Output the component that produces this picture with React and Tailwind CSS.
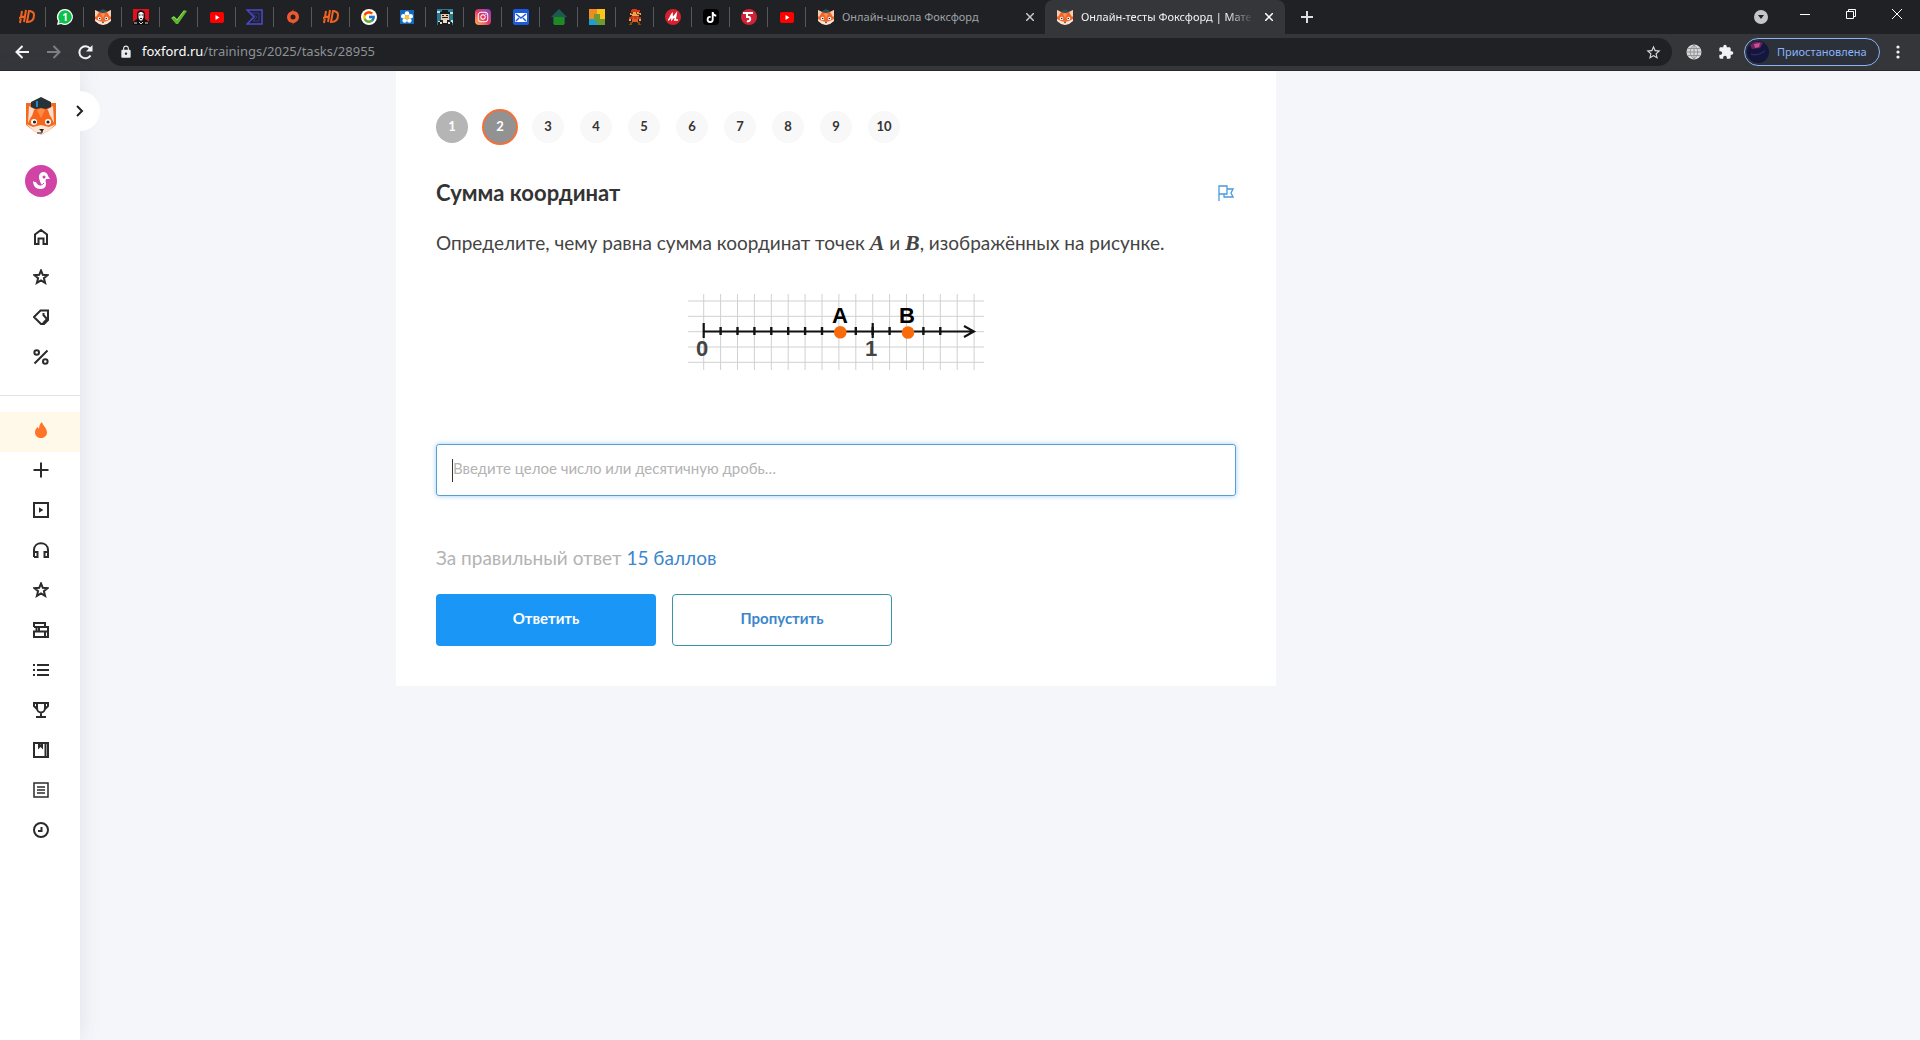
import React, { useState } from 'react';
import { FcGoogle } from 'react-icons/fc';
import { FaTiktok, FaInstagram } from 'react-icons/fa';
import { MdStarBorder, MdExtension, MdLock } from 'react-icons/md';

const FoxIcon = () => (
    <svg width="16" height="16" viewBox="0 0 16 16">
        <path d="M0 1l4 2h8l4-2v10l-3 3-5 2-5-2-3-3z" fill="#f0652a" />
        <path d="M0 1l4 2-3 5-1-1zM16 1l-4 2 3 5 1-1z" fill="#fbcdb0" />
        <path d="M4 2l4-2 4 2v1l-4 1-4-1z" fill="#23515c" />
        <path d="M6 5l2-1 2 1-2 4z" fill="#ff9050" />
        <path d="M0 10l4 2 4 1 4-1 4-2v2l-4 3-4 1-4-1-4-3z" fill="#fde3d4" />
        <circle cx="4.500" cy="9.500" r="1.700" fill="#fff" />
        <circle cx="11.500" cy="9.500" r="1.700" fill="#fff" />
        <circle cx="4.700" cy="9.500" r="0.800" fill="#222" />
        <circle cx="11.300" cy="9.500" r="0.800" fill="#222" />
        <path d="M7 13h2l-1 1.500z" fill="#222" />
    </svg>
);

const HdIcon = () => (
    <svg width="16" height="16" viewBox="0 0 16 16" fill="none" stroke="#f26322" strokeWidth="2">
        <path d="M3 2L1 14M7 1L5 13M0 9l7-2M10 2L8 13c5 0 7-3 7-7 0-3-2-4-6-4" />
    </svg>
);

const YoutubeIcon = () => (
    <svg width="16" height="16" viewBox="0 0 16 16">
        <rect x="1" y="3" width="14" height="11" rx="2" fill="#f00" />
        <path d="M6.500 6v5l4-2.500z" fill="#fff" />
    </svg>
);

const WhatsappIcon = () => (
    <svg width="18" height="18" viewBox="0 0 18 18">
        <path d="M9 1a8 8 0 1 1-4 15l-4 1 1-4A8 8 0 0 1 9 1z" fill="#fff" />
        <path d="M9 2.300a6.700 6.700 0 1 1-3.500 12.400l-2.700.8.800-2.600A6.700 6.700 0 0 1 9 2.300z" fill="#0bc04b" />
        <text x="9" y="12.500" textAnchor="middle" fontSize="10" fontWeight="bold" fill="#fff" fontFamily="Noto Sans, sans-serif">1</text>
    </svg>
);

const PortraitIcon = () => (
    <svg width="16" height="16" viewBox="0 0 16 16">
        <rect width="16" height="16" fill="#e2101c" />
        <path d="M4 5c0-5 8-5 8 0v5l4 3v3H0v-3l4-3z" fill="#111" />
        <path d="M5.500 4.500c1-2 4-2 5 0v4L9 11.500H7L5.500 9z" fill="#f3f3f3" />
        <path d="M6 6h1.500M8.700 6h1.500M7 9.500h2" stroke="#222" />
        <path d="M1 14h3M12 14h3M6 13l2 2 2-2" stroke="#ddd" fill="none" />
    </svg>
);

const CheckIcon = () => (
    <svg width="16" height="16" viewBox="0 0 16 16">
        <path d="M0 9l3-2 3 3 7-9 3 1-9 13H5z" fill="#5fb52e" />
        <path d="M1 9l2-1 3 3 7-9" stroke="#8fdc55" fill="none" />
    </svg>
);

const SigmaIcon = () => (
    <svg width="18" height="16" viewBox="0 0 18 16" fill="none" stroke="#4b49d1" strokeWidth="1.500">
        <path d="M1 1h15v14H1l7-7z" />
        <path d="M5 4h8v8H7l4-4z" stroke="#35349a" strokeWidth="1" />
    </svg>
);

const OriginIcon = () => (
    <svg width="16" height="16" viewBox="0 0 16 16">
        <path d="M9 0L8 2c4 0 6 3 6 6s-2 5-5 6l-2 2 1-2c-4 0-6-3-6-6s2-5 5-6z" fill="#f0592b" />
        <circle cx="8" cy="8" r="2.500" fill="#202124" />
    </svg>
);

const FlowerIcon = () => (
    <svg width="16" height="16" viewBox="0 0 16 16">
        <rect x="1" y="1" width="14" height="14" fill="#1268bf" />
        <g fill="#fff">
            <circle cx="8" cy="4.500" r="2.300" />
            <circle cx="11.700" cy="7.200" r="2.300" />
            <circle cx="10.300" cy="11.500" r="2.300" />
            <circle cx="5.700" cy="11.500" r="2.300" />
            <circle cx="4.300" cy="7.200" r="2.300" />
        </g>
        <circle cx="8" cy="8.500" r="2.300" fill="#f5c533" />
    </svg>
);

const PixelManIcon = () => (
    <svg width="16" height="16" viewBox="0 0 16 16" shapeRendering="crispEdges">
        <rect width="16" height="16" fill="#2a7a94" />
        <path d="M0 2h3v2H0zM13 3h3v2h-3zM1 12h2v2H1zM14 11h2v3h-2z" fill="#b9e5ec" />
        <path d="M5 1h6v2h2v2H3V3h2z" fill="#191919" />
        <path d="M4 5h8v6H4z" fill="#ecc6a0" />
        <path d="M5 6h2v1H5zM9 6h2v1H9zM5 8h6v1H5zM3 11h10v2h2v3H1v-3h2z" fill="#1d1d1d" />
        <path d="M6 11h4v3H6zM3 13h2v2H3zM11 13h2v2h-2z" fill="#e9dfd0" />
    </svg>
);

const InstaIcon = () => (
    <span className="flex h-4 w-4 items-center justify-center rounded bg-linear-to-tr from-[#fdb43e] via-[#e33066] to-[#7f3bc9] text-white">
        <FaInstagram size={12} />
    </span>
);

const MailIcon = () => (
    <svg width="16" height="16" viewBox="0 0 16 16">
        <rect width="16" height="16" rx="2" fill="#1b5bdb" />
        <rect x="2" y="4" width="12" height="9" rx="1" fill="#fff" />
        <path d="M3 5l5 4 5-4M3 12l3-3M13 12l-3-3" stroke="#1b5bdb" strokeWidth="1.500" fill="none" />
    </svg>
);

const HouseIcon = () => (
    <svg width="16" height="16" viewBox="0 0 16 16">
        <path d="M8 0l8 8h-2v7H2V8H0z" fill="#1c5b52" />
        <path d="M3 8h10v8H3z" fill="#1f8a1f" />
    </svg>
);

const BlocksIcon = () => (
    <svg width="16" height="16" viewBox="0 0 16 16">
        <path d="M0 0h8v5H5v5H0z" fill="#ef8d22" />
        <path d="M8 0h8v10h-5V5H8z" fill="#fbc31c" />
        <path d="M0 10h5v2h3v4H0z" fill="#1a9ed4" />
        <path d="M5 5h6v5h5v6H8v-4H5z" fill="#6d9b32" />
    </svg>
);

const MarioIcon = () => (
    <svg width="16" height="16" viewBox="0 0 16 16" shapeRendering="crispEdges">
        <path d="M5 0h5v1h3v2H4V1h1z" fill="#d8321d" />
        <path d="M4 3h8v1h2v2h-2v1H5V6H3V4h1z" fill="#f1a251" />
        <path d="M4 3h2v2H4zM9 3h1v2H9zM10 5h3v1h-3z" fill="#6d4310" />
        <path d="M4 7h8v1h2v2h-3v3H5v-3H2V8h2z" fill="#bf3a1c" />
        <path d="M6 8h1v2h3V8h1v5H5v-3h1z" fill="#e05a24" />
        <path d="M2 10h2v2H2zM12 10h2v2h-2z" fill="#f1a251" />
        <path d="M3 13h3v1H5v2H2v-1h1zM10 13h3v2h1v1h-3v-2h-1z" fill="#7c4a12" />
    </svg>
);

const RedMIcon = () => (
    <svg width="16" height="16" viewBox="0 0 16 16">
        <circle cx="8" cy="8" r="8" fill="#d5202f" />
        <path d="M3 11c2 0 3-5 4-6v5l4-5-1 6h3" stroke="#fff" strokeWidth="1.700" fill="none" />
    </svg>
);

const TiktokIcon = () => (
    <span className="flex h-4 w-4 items-center justify-center rounded bg-black text-white">
        <FaTiktok size={11} />
    </span>
);

const FiveIcon = () => (
    <svg width="16" height="16" viewBox="0 0 16 16">
        <circle cx="8" cy="8" r="8" fill="#cf2335" />
        <path d="M2 4h10M6 4v4h2a2 2 0 1 1-2 4" stroke="#fff" strokeWidth="2" fill="none" />
    </svg>
);

const pinnedTabs = [
    { title: 'HD', icon: HdIcon },
    { title: 'WhatsApp', icon: WhatsappIcon },
    { title: 'Фоксфорд', icon: FoxIcon },
    { title: 'Портрет', icon: PortraitIcon },
    { title: 'Проверка', icon: CheckIcon },
    { title: 'YouTube', icon: YoutubeIcon },
    { title: 'Сигма', icon: SigmaIcon },
    { title: 'Origin', icon: OriginIcon },
    { title: 'HD', icon: HdIcon },
    {
        title: 'Google',
        icon: () => (
            <span className="flex h-4 w-4 items-center justify-center rounded-full bg-white">
                <FcGoogle size={14} />
            </span>
        ),
    },
    { title: 'Цветок', icon: FlowerIcon },
    { title: 'Игра', icon: PixelManIcon },
    { title: 'Instagram', icon: InstaIcon },
    { title: 'Почта', icon: MailIcon },
    { title: 'Дом', icon: HouseIcon },
    { title: 'Блоки', icon: BlocksIcon },
    { title: 'Марио', icon: MarioIcon },
    { title: 'М', icon: RedMIcon },
    { title: 'TikTok', icon: TiktokIcon },
    { title: 'Пять', icon: FiveIcon },
    { title: 'YouTube', icon: YoutubeIcon },
];

const CloseIcon = () => (
    <svg width="8" height="8" viewBox="0 0 8 8" stroke="currentColor" strokeWidth="1.500">
        <path d="M0 0l8 8M8 0L0 8" />
    </svg>
);

const TabBar = () => (
    <div className="flex h-[34px] bg-[#202124] pl-2">
        {pinnedTabs.map((tab, index) => (
            <button key={index} aria-label={tab.title} className="relative flex w-[38px] shrink-0 items-center justify-center after:absolute after:right-0 after:h-5 after:w-px after:bg-[#55575b]">
                <tab.icon />
            </button>
        ))}
        <div className="flex w-[239px] items-center pr-[11px] pl-3">
            <FoxIcon />
            <span className="ml-2 flex-1 text-[11px] whitespace-nowrap text-[#9fa3a8]">Онлайн-школа Фоксфорд</span>
            <button aria-label="Закрыть вкладку" className="text-[#c5c8cc]"><CloseIcon /></button>
        </div>
        <div className="flex w-[240px] items-center rounded-t-lg bg-[#35363a] pr-3 pl-3">
            <FoxIcon />
            <span className="mr-3 ml-2 flex-1 mask-r-from-85% text-[11px] whitespace-nowrap text-[#f1f3f4]">Онлайн-тесты Фоксфорд | Мате</span>
            <button aria-label="Закрыть вкладку" className="text-white"><CloseIcon /></button>
        </div>
        <button aria-label="Новая вкладка" className="ml-4 text-[#dcdee0]">
            <svg width="12" height="12" viewBox="0 0 12 12" stroke="currentColor" strokeWidth="2"><path d="M6 0v12M0 6h12" /></svg>
        </button>
        <div className="ml-auto flex items-center">
            <button aria-label="Поиск вкладок" className="mr-[14px]">
                <svg width="14" height="14" viewBox="0 0 14 14"><circle cx="7" cy="7" r="7" fill="#c4c7ca" /><path d="M4 5h6l-3 4z" fill="#202124" /></svg>
            </button>
            <div className="flex pb-[6px]">
                <button aria-label="Свернуть" className="flex h-7 w-[46px] items-center justify-center">
                    <svg width="10" height="10" viewBox="0 0 10 10"><path d="M0 5.500h10" stroke="#fff" /></svg>
                </button>
                <button aria-label="Развернуть" className="flex h-7 w-[46px] items-center justify-center">
                    <svg width="10" height="10" viewBox="0 0 10 10" stroke="#fff" fill="none"><path d="M0.500 2.500h7v7h-7zM2.500 2.500v-2h7v7h-2" /></svg>
                </button>
                <button aria-label="Закрыть" className="flex h-7 w-[46px] items-center justify-center">
                    <svg width="10" height="10" viewBox="0 0 10 10" stroke="#fff"><path d="M0 0l10 10M10 0L0 10" /></svg>
                </button>
            </div>
        </div>
    </div>
);

const Toolbar = () => (
    <div className="flex h-[37px] items-center border-b border-[#28272c] bg-[#35363a] pr-[20px] pl-[15px]">
        <button aria-label="Назад" className="mr-[18px] text-[#f1f3f4]">
            <svg width="14" height="14" viewBox="0 0 14 14" fill="none" stroke="currentColor" strokeWidth="2"><path d="M14 7H1.500M7.500 1l-6 6 6 6" /></svg>
        </button>
        <button aria-label="Вперёд" className="mr-[17px] text-[#7d7f83]">
            <svg width="14" height="14" viewBox="0 0 14 14" fill="none" stroke="currentColor" strokeWidth="2"><path d="M0 7h12.500M6.500 1l6 6-6 6" /></svg>
        </button>
        <button aria-label="Обновить" className="mr-[15px] text-[#f1f3f4]">
            <svg width="15" height="15" viewBox="0 0 15 15">
                <path d="M12.500 10.500A6 6 0 1 1 12 3.500" fill="none" stroke="currentColor" strokeWidth="2" />
                <path d="M14.500 0v6.500H8z" fill="currentColor" />
            </svg>
        </button>
        <div className="flex h-7 flex-1 items-center rounded-full bg-[#202124] pr-[10px] pl-[11px]">
            <MdLock size={14} color="#e8eaed" />
            <a href="#task" className="ml-[9px] flex-1 text-[13px] text-[#8e9297]"><span className="text-white">foxford.ru</span>/trainings/2025/tasks/28955</a>
            <button aria-label="Добавить в закладки" className="text-[#d5d7da]"><MdStarBorder size={17} /></button>
        </div>
        <button aria-label="Расширение" className="ml-[14px]">
            <svg width="16" height="16" viewBox="0 0 16 16">
                <circle cx="8" cy="8" r="7.500" fill="#d8d8d8" />
                <path d="M8 1v14M1 8h14M2 4.500h12M2 11.500h12M8 1c-5 4-5 10 0 14M8 1c5 4 5 10 0 14" stroke="#87888b" strokeWidth="0.800" fill="none" />
            </svg>
        </button>
        <button aria-label="Расширения" className="ml-4 text-[#f1f3f4]"><MdExtension size={16} /></button>
        <button className="ml-[10px] flex h-7 w-[136px] items-center rounded-full border border-[#8ab4f8] bg-[#2c3039] pl-[2px] text-[11px] text-[#8ab4f8]">
            <svg width="22" height="22" viewBox="0 0 22 22" className="mr-2">
                <circle cx="11" cy="11" r="11" fill="#14163c" />
                <path d="M3 4a11 11 0 0 1 13-2l-3 5-8 1z" fill="#6a2460" />
                <path d="M7 3l6-1-1 4-4 1z" fill="#d0508f" />
                <path d="M4 13c5 2 9 0 14-3" stroke="#2c3a78" fill="none" />
            </svg>
            Приостановлена
        </button>
        <button aria-label="Меню" className="ml-4">
            <svg width="4" height="14" viewBox="0 0 4 14" fill="#f1f3f4"><circle cx="2" cy="2" r="1.600" /><circle cx="2" cy="7" r="1.600" /><circle cx="2" cy="12" r="1.600" /></svg>
        </button>
    </div>
);

const STAR = 'M8 1.500l1.800 4.300 4.700.4-3.600 3 1.200 4.600L8 11.300l-4.100 2.500 1.200-4.600-3.600-3 4.700-.4z';

const topLinks = [
    { label: 'Главная', d: 'M2 15V5.500L8 1l6 4.500V15h-3.500V9.500h-5V15z' },
    { label: 'Избранное', d: STAR },
    { label: 'Предложения', d: 'M1 8l6.500-6.500H15V11l-4 4H8zM10 14.500l4-4.500-4-4.500M10.500 4v3' },
    { label: 'Скидки', d: 'M14.500 1.500l-13 13M6 3.500a2.300 2.300 0 1 1-4.600 0 2.300 2.300 0 0 1 4.600 0M14.600 12.500a2.300 2.300 0 1 1-4.600 0 2.300 2.300 0 0 1 4.600 0' },
];

const bottomLinks = [
    { label: 'Добавить', d: 'M8 .5v15M.5 8h15' },
    { label: 'Видео', d: 'M1 1h14v14H1zM7 7v2l1.500-1z' },
    { label: 'Репетитор', d: 'M1 15V8c0-9 14-9 14 0v7h-3.500v-5H15M1 10h3.500v5H1' },
    { label: 'Олимпиады', d: STAR },
    { label: 'Учебник', d: 'M1 5V1h11v4M1 5h14v4.500M3.500 5v4.500M6 5v4.500M1 9.500h14V15H1zM12 9.500V15' },
    { label: 'Список', d: 'M4 3h12M4 8h12M4 13h12M0 3h2M0 8h2M0 13h2' },
    { label: 'Достижения', d: 'M4 1h8v5c0 6-8 6-8 0zM4 1H1v3l3 3M12 1h3v3l-3 3M8 10v5M3 15h10' },
    { label: 'Дневник', d: 'M1 1h14v14H1zM12.500 1v14M6 1v4l1.500-1.500L9 5V1' },
    { label: 'Журнал', d: 'M1 1h14v14H1zM4 5h8M4 8h8M4 11h8', width: 1.5 },
    { label: 'История', d: 'M15 8A7 7 0 1 1 1 8a7 7 0 0 1 14 0M8.500 5v4H5' },
];

const SideLink = ({ label, d, width = 2 }) => (
    <a href="#nav" aria-label={label} className="flex h-10 w-full items-center justify-center pl-[2px]">
        <svg width="16" height="16" viewBox="0 0 16 16" fill="none" stroke="#2b2b2b" strokeWidth={width}>
            <path d={d} />
        </svg>
    </a>
);

const Sidebar = () => (
    <aside className="relative flex w-20 shrink-0 flex-col items-center bg-white shadow-[0_0_20px_rgba(60,70,100,0.12)]">
        <button aria-label="Развернуть меню" className="absolute top-5 -right-5 flex h-10 w-10 items-center justify-center rounded-full bg-white">
            <svg width="8" height="12" viewBox="0 0 8 12" fill="none" stroke="#222" strokeWidth="2"><path d="M1 1l5 5-5 5" /></svg>
        </button>
        <a href="#home" aria-label="Фоксфорд" className="relative mt-[26px] pl-[2px]">
            <svg width="30" height="38" viewBox="0 0 30 38">
                <path d="M0 6h30v22l-8 6-7 4-7-4-8-6z" fill="#f4691f" />
                <path d="M3 9l8 5-6 6-3 6zM27 9l-8 5 6 6 3 6z" fill="#fcdccb" />
                <path d="M8 13l7-3 7 3 3 9-6-2-4 9-4-9-6 2z" fill="#f8641c" />
                <path d="M11 13l4-2 4 2-4 8z" fill="#ff8a45" />
                <path d="M5 5l10-5 10 5v5l-5 2-5-1-5 1-5-2z" fill="#273238" />
                <path d="M10 4h2v6h-2z" fill="#2386cf" />
                <path d="M0 27l7 3 8-2 8 2 7-3-8 7-7 4-7-4z" fill="#fde4d5" />
                <circle cx="8" cy="25" r="3" fill="#fff" />
                <circle cx="22" cy="25" r="3" fill="#fff" />
                <circle cx="8.500" cy="25" r="1.600" fill="#222" />
                <circle cx="22" cy="25" r="1.600" fill="#222" />
                <path d="M13 32h5l-2 3z" fill="#222" />
                <path d="M11 36h5v-2" stroke="#222" fill="none" />
            </svg>
        </a>
        <a href="#profile" aria-label="Профиль" className="mt-[30px] mb-5 pl-[2px]">
            <svg width="32" height="32" viewBox="0 0 32 32">
                <circle cx="16" cy="16" r="16" fill="#d143a5" />
                <path d="M14 12a4.500 4.500 0 0 1 9-1l2 3h-4c-1 2 0 3 0 5 0 4-3 5-6 5-4 0-7-3-7-8 1 1 2 1 3 1 1 3 4 4 5 3s-2-4-2-8z" fill="#fff" />
                <circle cx="19" cy="12" r="1.500" fill="#d143a5" />
                <path d="M13 18q3 4 6 0" stroke="#d143a5" fill="none" />
            </svg>
        </a>
        <nav className="w-full">
            {topLinks.map((link) => <SideLink key={link.label} {...link} />)}
            <div className="mt-[18px] mb-4 h-px bg-[#e4e4e8]"></div>
            <a href="#training" aria-label="Тренировки" className="flex h-10 items-center justify-center bg-[#fff9ea] pb-1 pl-[2px]">
                <svg width="12" height="16" viewBox="0 0 12 16"><path d="M7 0c1 4 5 6 5 10.500C12 14 9 16 6 16s-6-2-6-5.500C0 8 1 6.500 2.500 5L4 7C4 4 5 1.500 7 0z" fill="#ff7429" /></svg>
            </a>
            <div className="-mt-[2px]">
                {bottomLinks.map((link) => <SideLink key={link.label} {...link} />)}
            </div>
        </nav>
    </aside>
);

const NumberLine = () => {
    const cell = 16.9;
    const x0 = 15.7;
    const lines = Array.from({ length: 17 }, (_, i) => x0 + i * cell);
    return (
        <svg width="296" height="76" viewBox="0 0 296 76" className="mx-auto" role="img" aria-label="Числовая прямая">
            {lines.map((x) => <path key={x} d={`M${x} 0v76`} stroke="#d0d0d0" />)}
            {[7, 22.3, 37.7, 53, 68.3].map((y) => <path key={y} d={`M0 ${y}h296`} stroke="#d0d0d0" />)}
            <path d="M15.700 37.500H285M276 32l10 5.500-10 5.500" stroke="#111" strokeWidth="2" fill="none" />
            {lines.slice(1, 15).map((x) => <path key={x} d={`M${x} 33v8`} stroke="#111" strokeWidth="2.400" />)}
            <path d="M15.700 29v15M184.700 29v15" stroke="#111" strokeWidth="2.200" />
            <circle cx="152.300" cy="38.300" r="6.300" fill="#f96b0a" />
            <circle cx="220" cy="38.500" r="6.300" fill="#f96b0a" />
            <g fontFamily="Liberation Sans, sans-serif" fontWeight="bold" fontSize="22" textAnchor="middle">
                <text x="152" y="29" fill="#000">A</text>
                <text x="219" y="29" fill="#000">B</text>
                <text x="14" y="62" fill="#444">0</text>
                <text x="183" y="62" fill="#444">1</text>
            </g>
        </svg>
    );
};

const stepClass = (step) => {
    if (step === 1) return 'bg-[#b5b5b5] text-white';
    if (step === 2) return 'bg-[#929292] text-white ring-2 ring-[#f2703a]';
    return 'bg-[#f8f8f8] text-[#333]';
};

const TaskCard = () => {
    const [answer, setAnswer] = useState('');

    return (
        <section className="w-[880px] bg-white p-10">
            <div className="flex gap-4">
                {[1, 2, 3, 4, 5, 6, 7, 8, 9, 10].map((step) => (
                    <button key={step} className={`h-8 w-8 rounded-full text-[13px] font-bold ${stepClass(step)}`}>{step}</button>
                ))}
            </div>
            <div className="mt-8 flex items-center justify-between">
                <h1 className="text-[22px] leading-9 font-bold text-[#333]">Сумма координат</h1>
                <button aria-label="Сообщить об ошибке" className="mr-[2px]">
                    <svg width="16" height="16" viewBox="0 0 16 16" fill="none" stroke="#4a9bdc" strokeWidth="1.300"><path d="M1 16V1h8v8H1M9 4h6l-2 4 2 4H6V9" /></svg>
                </button>
            </div>
            <p className="mt-4 text-[19px] leading-8 text-[#444]">
                Определите, чему равна сумма координат точек <i className="font-['Liberation_Serif',serif] text-[22px] leading-none font-bold">A</i> и <i className="font-['Liberation_Serif',serif] text-[22px] leading-none font-bold">B</i>, изображённых на рисунке.
            </p>
            <div className="mt-[35px]">
                <NumberLine />
            </div>
            <div className="relative mt-[74px]">
                <input
                    type="text"
                    aria-label="Ответ"
                    value={answer}
                    onChange={(e) => setAnswer(e.target.value)}
                    placeholder="Введите целое число или десятичную дробь…"
                    className="block h-[52px] w-full rounded-[3px] border border-[#5a9fd4] px-4 pb-1 text-[15px] caret-transparent shadow-[0_0_5px_rgba(60,160,240,0.5)] outline-none placeholder:text-[#b3b3b3]"
                />
                {!answer && <span className="absolute top-[15px] left-4 h-[23px] w-px bg-[#333]"></span>}
            </div>
            <p className="mt-[46px] text-[19px] leading-8 text-[#b3b3b3]">За правильный ответ <span className="text-[#3b86cc]">15 баллов</span></p>
            <div className="mt-5 flex gap-4">
                <button className="h-[52px] w-[220px] rounded bg-[#1a96f6] pb-1 text-[15px] font-bold text-white">Ответить</button>
                <button className="h-[52px] w-[220px] rounded border border-[#3a93a8] pb-1 text-[15px] font-bold text-[#3b86cc]">Пропустить</button>
            </div>
        </section>
    );
};

const App = () => {
    return (
        <div className="flex min-h-screen flex-col bg-[#f5f6fa]">
            <header className="font-['Noto_Sans',sans-serif]">
                <TabBar />
                <Toolbar />
            </header>
            <div className="flex flex-1 font-['Lato',sans-serif]">
                <Sidebar />
                <main className="flex-1">
                    <div className="mx-auto max-w-[1208px]">
                        <TaskCard />
                    </div>
                </main>
            </div>
        </div>
    );
};

export default App;
